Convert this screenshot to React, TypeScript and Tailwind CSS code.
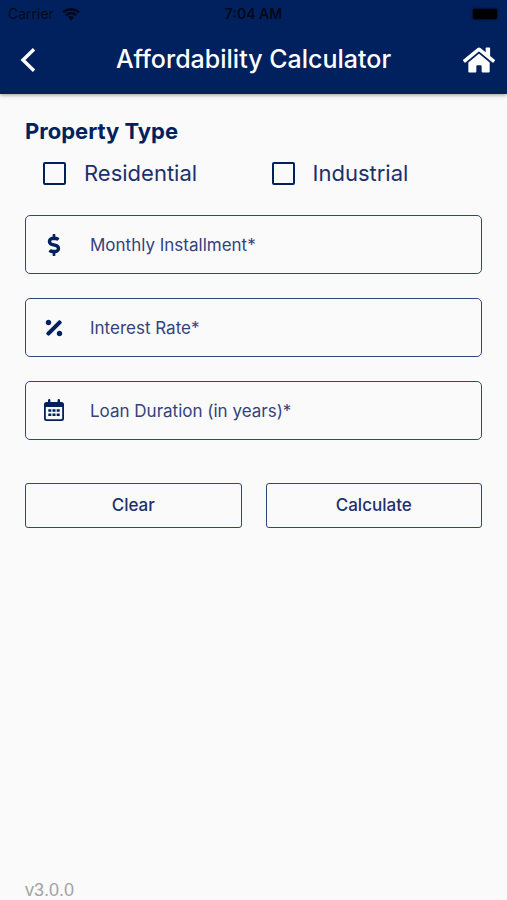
import React, { useState } from 'react';
import { FaDollarSign, FaHome, FaPercentage } from 'react-icons/fa';

type PropertyType = 'Residential' | 'Industrial';

interface FormState {
  installment: string;
  interestRate: string;
  duration: string;
}

interface FieldProps {
  name: keyof FormState;
  label: string;
  icon: React.ReactNode;
  value: string;
  onChange: (name: keyof FormState, value: string) => void;
}

const propertyTypes: PropertyType[] = ['Residential', 'Industrial'];
const emptyForm: FormState = { installment: '', interestRate: '', duration: '' };

function WifiIcon() {
  return (
    <svg width="18" height="13" viewBox="0 0 18 13" fill="currentColor" aria-hidden="true">
      <path d="M9 0C5.6 0 2.5 1.3.2 3.400L1.900 5.200C3.800 3.500 6.300 2.700 9 2.700s5.200.8 7.100 2.500l1.700-1.800C15.500 1.300 12.400 0 9 0z" />
      <path d="M9 4c-2.300 0-4.300.8-5.900 2.300l1.800 1.900C6 7.200 7.400 6.600 9 6.600s3 .6 4.100 1.600l1.800-1.900C13.300 4.800 11.300 4 9 4z" />
      <path d="M9 8c-1.100 0-2.200.4-3 1.200L9 12.700l3-3.500C11.200 8.400 10.100 8 9 8z" />
    </svg>
  );
}

function BackIcon() {
  return (
    <svg width="16" height="24" viewBox="0 0 16 24" fill="none" stroke="currentColor" strokeWidth="3.4" aria-hidden="true">
      <path d="M14 1.300L3 12l11 10.700" />
    </svg>
  );
}

function CalendarIcon() {
  return (
    <svg width="20" height="23" viewBox="0 0 20 23" fill="currentColor" aria-hidden="true">
      <path
        fillRule="evenodd"
        d="M4 1.200a1.200 1.200 0 0 1 2.400 0V3h7.200V1.200a1.200 1.200 0 0 1 2.400 0V3h1.500A2.500 2.500 0 0 1 20 5.500v14a2.500 2.500 0 0 1-2.500 2.500h-15A2.500 2.500 0 0 1 0 19.500v-14A2.500 2.500 0 0 1 2.500 3H4zM1.800 8v11.300c0 .5.400.9.900.9h14.600c.5 0 .9-.4.9-.9V8z"
      />
      <path d="M4.300 10.200h3v2.500h-3zM8.500 10.200h3v2.500h-3zM12.700 10.200h3v2.500h-3zM4.300 14.500h3v2.500h-3zM8.500 14.500h3v2.500h-3zM12.700 14.500h3v2.500h-3z" />
    </svg>
  );
}

function Field({ name, label, icon, value, onChange }: FieldProps) {
  return (
    <div className="flex items-center h-[59px] rounded-[5px] border border-[#33457f] focus-within:border-[#00215e]">
      <label htmlFor={name} aria-label={label} className="w-14 flex justify-center text-[#00215e]">
        {icon}
      </label>
      <input
        id={name}
        type="text"
        inputMode="decimal"
        placeholder={label}
        value={value}
        onChange={(e) => onChange(name, e.target.value)}
        className="flex-1 min-w-0 h-full ml-2 pr-4 bg-transparent text-[17px] text-[#00215e] placeholder:text-[#33427c] outline-none"
      />
    </div>
  );
}

export default function App() {
  const [types, setTypes] = useState<PropertyType[]>([]);
  const [form, setForm] = useState<FormState>(emptyForm);

  const toggleType = (type: PropertyType) => {
    setTypes((prev) => (prev.includes(type) ? prev.filter((t) => t !== type) : [...prev, type]));
  };

  const handleChange = (name: keyof FormState, value: string) => {
    setForm((prev) => ({ ...prev, [name]: value }));
  };

  const handleClear = () => {
    setTypes([]);
    setForm(emptyForm);
  };

  return (
    <div className="min-h-screen flex flex-col bg-[#fafafa] text-[#00215e] font-['Inter',sans-serif]">
      <header className="bg-[#00215e] pb-0.5 shadow-[0_1px_4px_rgba(0,0,0,0.4)]">
        {/* Status bar */}
        <div className="grid grid-cols-3 items-center h-7 px-2 text-sm text-[#01091a]">
          <div className="flex items-center gap-2">
            <span>Carrier</span>
            <WifiIcon />
          </div>
          <span className="text-center font-semibold">7:04 AM</span>
          <span className="justify-self-end w-6 h-2.5 mr-0.5 rounded-xs bg-black shadow-[0_0_2px_1px_rgba(0,0,0,0.5)]" />
        </div>

        <div className="flex items-center justify-between h-16 pl-5 pr-3 text-white">
          <button type="button" aria-label="Back" className="w-6 cursor-pointer">
            <BackIcon />
          </button>
          <h1 className="text-[25px] font-medium">Affordability Calculator</h1>
          <button type="button" aria-label="Home" className="w-8 cursor-pointer">
            <FaHome className="w-8 h-8" />
          </button>
        </div>
      </header>

      <main className="flex-1 flex flex-col px-[25px] pt-[21px]">
        <fieldset>
          <legend className="text-[22px] leading-8 font-bold">Property Type</legend>
          <div className="grid grid-cols-2 pt-2">
            {propertyTypes.map((type) => (
              <label key={type} className="flex items-center gap-[18px] pl-[18px] text-[22px] leading-9 text-[#1d306c]">
                <input
                  type="checkbox"
                  checked={types.includes(type)}
                  onChange={() => toggleType(type)}
                  className="appearance-none w-[23px] h-[23px] rounded-xs border-2 border-[#00215e] checked:bg-[#00215e]"
                />
                {type}
              </label>
            ))}
          </div>
        </fieldset>

        <div className="flex flex-col gap-6 mt-6">
          <Field
            name="installment"
            label="Monthly Installment*"
            icon={<FaDollarSign className="w-[22px] h-[22px]" />}
            value={form.installment}
            onChange={handleChange}
          />
          <Field
            name="interestRate"
            label="Interest Rate*"
            icon={<FaPercentage className="w-[22px] h-[22px]" />}
            value={form.interestRate}
            onChange={handleChange}
          />
          <Field
            name="duration"
            label="Loan Duration (in years)*"
            icon={<CalendarIcon />}
            value={form.duration}
            onChange={handleChange}
          />
        </div>

        <div className="grid grid-cols-2 gap-6 mt-[43px] text-[17px] font-medium text-[#1d306c]">
          <button type="button" onClick={handleClear} className="h-[45px] rounded-[3px] border border-[#33457f] cursor-pointer">
            Clear
          </button>
          <button type="button" className="h-[45px] rounded-[3px] border border-[#33457f] cursor-pointer">
            Calculate
          </button>
        </div>

        <footer className="mt-auto text-lg leading-5 text-[#a3a3a3] font-['Liberation_Sans',sans-serif]">v3.0.0</footer>
      </main>
    </div>
  );
}
